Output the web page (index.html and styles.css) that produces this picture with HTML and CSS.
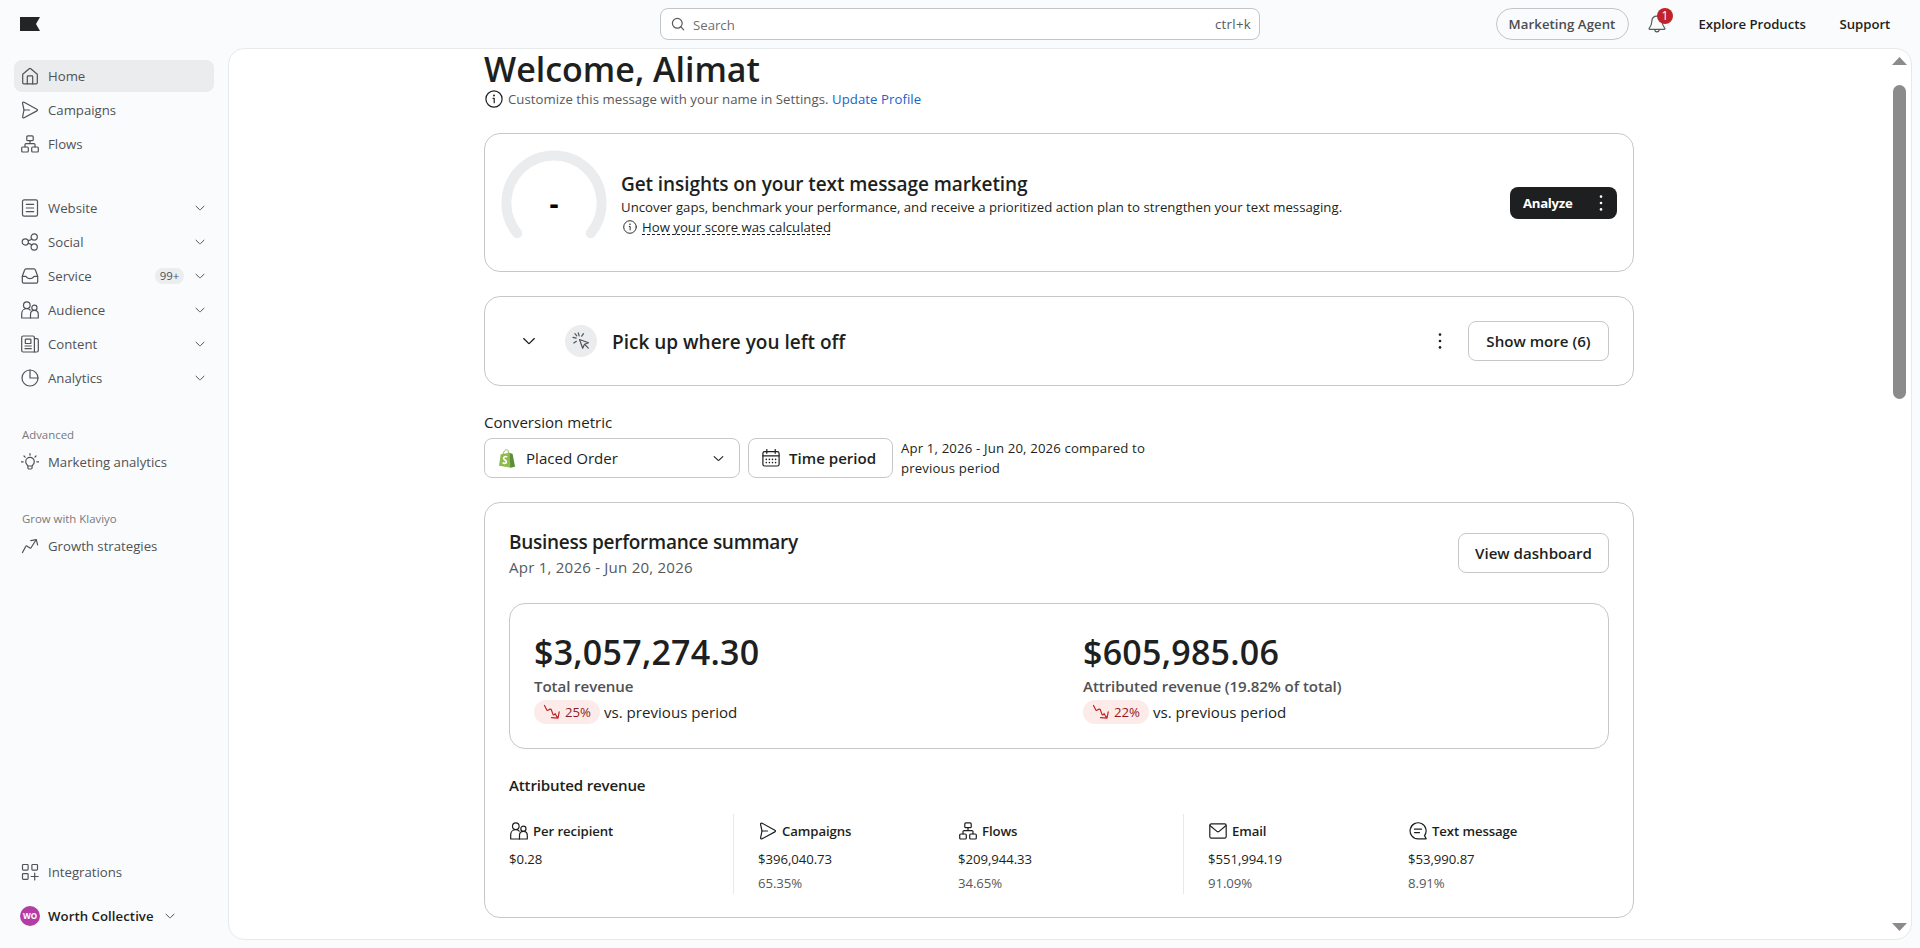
FILE: index.html
```html
<!DOCTYPE html>
<html lang="en">
<head>
	<meta charset="utf-8" />
	<title>Home | Klaviyo</title>
	<link rel="stylesheet" href="styles.css">
</head>
<body>
<!-- icons -->
<svg class="sprite">
	<symbol id="home" viewBox="0 0 18 18"><path d="M1.7 7.2 8.2 1.700q.8-.600 1.600 0L16.300 7.200v8.600a1 1 0 0 1-1 1H2.700a1 1 0 0 1-1-1z"/><path d="M6.300 16.800V9.700a.8.8 0 0 1 .8-.8h3.800a.8.8 0 0 1 .8.8v7.100"/></symbol>
	<symbol id="send" viewBox="0 0 18 18"><path d="M1.5 2.2c0-.9.8-1.3 1.6-1l12.8 7c.8.4.8 1.3 0 1.7l-12.8 6.900c-.8.4-1.600-.2-1.500-1L3 9z"/><path d="M3 9h5.500"/></symbol>
	<symbol id="flows" viewBox="0 0 18 18"><rect x="5.8" y=".9" width="6.4" height="4.8" rx="1"/><rect x=".7" y="12" width="6.6" height="5" rx="1"/><rect x="10.7" y="12" width="6.6" height="5" rx="1"/><path d="M9 5.7v2.9M4 12v-2.4a1 1 0 0 1 1-1h8a1 1 0 0 1 1 1V12"/></symbol>
	<symbol id="website" viewBox="0 0 18 18"><rect x="1.5" y=".9" width="15" height="16.2" rx="1.6"/><path d="M5.300 5.300h7.400M5.300 9h7.400M5.300 12.700h7.400"/></symbol>
	<symbol id="social" viewBox="0 0 18 18"><circle cx="4.3" cy="9" r="3.1"/><circle cx="13.2" cy="4" r="3.1"/><circle cx="13.2" cy="14" r="3.1"/><path d="M7.200 7.700c1.800-.3 3-1 3.500-2M7.200 10.300c1.800.3 3 1 3.500 2"/></symbol>
	<symbol id="service" viewBox="0 0 18 18"><path d="M1.300 9.300 3.600 3c.2-.7.8-1.100 1.500-1.100h7.800c.7 0 1.300.4 1.500 1.100l2.300 6.300v5.400a1.400 1.400 0 0 1-1.400 1.400H2.700a1.400 1.400 0 0 1-1.400-1.400z"/><path d="M1.300 9.300h3.200c.7 0 .9.5 1.300 1.100.6.9 1.500 1.200 3.200 1.200s2.600-.3 3.200-1.200c.4-.6.6-1.100 1.300-1.100h3.200"/></symbol>
	<symbol id="audience" viewBox="0 0 18 18"><circle cx="5.800" cy="4.200" r="3.300"/><path d="M9.500 17H.7v-4.300c0-3 2.200-5 5-5 1.500 0 2.700.5 3.500 1.500"/><circle cx="13.400" cy="6.800" r="2.600"/><path d="M9.500 17v-3.600c0-2.400 1.600-4 3.900-4s3.900 1.600 3.900 4V17z"/></symbol>
	<symbol id="content" viewBox="0 0 18 18"><path d="M13.400 17H2.200a1.500 1.500 0 0 1-1.500-1.500v-13A1.500 1.500 0 0 1 2.200 1h9.700a1.500 1.500 0 0 1 1.500 1.500z"/><path d="M13.400 3.700h2.400a1.500 1.500 0 0 1 1.500 1.500v10.300a1.500 1.500 0 0 1-1.500 1.500h-2.400"/><rect x="4.300" y="4.200" width="5.600" height="4.300" rx=".6"/><path d="M4 11h6.300M4 13.700h6.300"/></symbol>
	<symbol id="analytics" viewBox="0 0 18 18"><circle cx="9" cy="9" r="8"/><path d="M9 1v8h8"/></symbol>
	<symbol id="bulb" viewBox="0 0 18 18"><path d="M6.900 13.300c0-1.200-2.200-2-2.200-4.600a4.300 4.300 0 0 1 8.600 0c0 2.600-2.200 3.400-2.200 4.600v1.500a1.200 1.200 0 0 1-1.200 1.200H8.100a1.200 1.200 0 0 1-1.200-1.200zM6.900 13h4.200"/><path d="M9 .6v1.600M3 3l1.100 1.100M15 3l-1.100 1.100M.2 8.800h2M15.800 8.800h2"/></symbol>
	<symbol id="growth" viewBox="0 0 18 18"><path d="M1.500 15.500 4.800 9.300c.2-.4.6-.5 1-.3l3.200 2.100c.4.200.8.100 1-.3l5-7.800"/><path d="M9.800 3.600 15.300 2.600l1.300 5.200"/></symbol>
	<symbol id="apps" viewBox="0 0 18 18"><rect x="1.500" y="1.500" width="5.600" height="5.600" rx=".8"/><rect x="10.900" y="1.500" width="5.600" height="5.600" rx=".8"/><rect x="1.500" y="10.700" width="5.600" height="5.600" rx=".8"/><path d="M13.700 10v7M10.200 13.500h7"/></symbol>
	<symbol id="chev" viewBox="0 0 12 12"><path d="M2 4.200 5.500 7.600q.5.500 1 0L10 4.200"/></symbol>
	<symbol id="info" viewBox="0 0 18 18"><circle cx="9" cy="9" r="8.100"/><path d="M8 8.300h1.200v4.400"/><circle class="dot" cx="9" cy="5.500" r=".95"/></symbol>
	<symbol id="dots" viewBox="0 0 4 18"><circle class="dot" cx="2" cy="2.600" r="1.300"/><circle class="dot" cx="2" cy="9" r="1.300"/><circle class="dot" cx="2" cy="15.400" r="1.300"/></symbol>
	<symbol id="down" viewBox="0 0 18 18"><path d="M1.500 2.500 3.800 7c.2.400.6.500 1 .3l2.400-1.200c.400-.2.800 0 1 .4L10 11.400c.2.400.6.600 1 .4l1-.4M8.500 14.600l6.500.5 1.200-6.300M12 10.500l2.700 4.400"/></symbol>
	<symbol id="mail" viewBox="0 0 18 18"><rect x=".8" y="1.800" width="16.400" height="14.400" rx="1.600"/><path d="M1.200 3.700 8.200 9.600q.8.600 1.600 0L16.800 3.700"/></symbol>
	<symbol id="chat" viewBox="0 0 18 18"><path d="M17.200 16.800H9A8 8 0 1 1 15.500 13.600z"/><path d="M5.500 7.200h7M5.500 10.600h5"/></symbol>
</svg>

<div class="header">
	<div class="logo"><svg width="20" height="14" viewBox="0 0 20 14"><path d="M0 0h20l-4 7 4 7H0z"/></svg></div>
	<div class="search">
		<svg class="icon" viewBox="0 0 14 14"><circle cx="6.300" cy="6.300" r="4.900"/><path d="M9.900 9.900l2.800 3"/></svg>
		<span class="placeholder">Search</span>
		<span class="key">ctrl+k</span>
	</div>
	<div class="top-links">
		<a class="agent">Marketing Agent</a>
		<div class="bell">
			<svg class="icon" viewBox="0 0 18 20"><path d="M9 2.200C5.600 2.200 3.900 4.600 3.800 7.600c-.1 3.600-.7 4.600-2.500 6.500-.5.600-.2 1.300.5 1.300h14.400c.7 0 1-.7.5-1.300-1.800-1.900-2.400-2.900-2.500-6.500C14.100 4.600 12.400 2.200 9 2.200z"/><path d="M6.800 15.600c0 1.400 1 2.300 2.200 2.300s2.200-.9 2.200-2.300"/></svg>
			<span class="count">1</span>
		</div>
		<a class="explore">Explore Products</a>
		<a class="support">Support</a>
	</div>
</div>

<div class="page">
	<div class="sidebar">
		<ul class="nav">
			<li class="active"><svg class="icon"><use href="#home"/></svg><span>Home</span></li>
			<li><svg class="icon"><use href="#send"/></svg><span>Campaigns</span></li>
			<li><svg class="icon"><use href="#flows"/></svg><span>Flows</span></li>
		</ul>
		<ul class="nav nav-main">
			<li><svg class="icon"><use href="#website"/></svg><span>Website</span><svg class="icon chev"><use href="#chev"/></svg></li>
			<li><svg class="icon"><use href="#social"/></svg><span>Social</span><svg class="icon chev"><use href="#chev"/></svg></li>
			<li><svg class="icon"><use href="#service"/></svg><span>Service</span><b class="tag">99+</b><svg class="icon chev"><use href="#chev"/></svg></li>
			<li><svg class="icon"><use href="#audience"/></svg><span>Audience</span><svg class="icon chev"><use href="#chev"/></svg></li>
			<li><svg class="icon"><use href="#content"/></svg><span>Content</span><svg class="icon chev"><use href="#chev"/></svg></li>
			<li><svg class="icon"><use href="#analytics"/></svg><span>Analytics</span><svg class="icon chev"><use href="#chev"/></svg></li>
		</ul>
		<p class="nav-title">Advanced</p>
		<ul class="nav">
			<li><svg class="icon"><use href="#bulb"/></svg><span>Marketing analytics</span></li>
		</ul>
		<p class="nav-title">Grow with Klaviyo</p>
		<ul class="nav">
			<li><svg class="icon"><use href="#growth"/></svg><span>Growth strategies</span></li>
		</ul>
		<ul class="nav nav-bottom">
			<li><svg class="icon"><use href="#apps"/></svg><span>Integrations</span></li>
			<li class="account"><i class="avatar">WO</i><span>Worth Collective</span><svg class="icon chev"><use href="#chev"/></svg></li>
		</ul>
	</div>

	<div class="main">
		<div class="content">
			<h1>Welcome, Alimat</h1>
			<p class="hint"><svg class="icon"><use href="#info"/></svg><span>Customize this message with your name in Settings. <a>Update Profile</a></span></p>

			<div class="card insights">
				<div class="gauge">
					<svg width="106" height="106" viewBox="0 0 106 106"><path d="M16.200 83.200A47.600 47.600 0 1 1 89.800 83.200"/></svg>
					<span>-</span>
				</div>
				<div class="insights-text">
					<h2>Get insights on your text message marketing</h2>
					<p class="desc">Uncover gaps, benchmark your performance, and receive a prioritized action plan to strengthen your text messaging.</p>
					<p class="score"><svg class="icon"><use href="#info"/></svg><span>How your score was calculated</span></p>
				</div>
				<div class="analyze"><span>Analyze</span><svg class="icon dots"><use href="#dots"/></svg></div>
			</div>

			<div class="card pickup">
				<svg class="icon chev"><use href="#chev"/></svg>
				<div class="round"><svg class="icon" viewBox="0 0 18 18"><path d="M7.500 7.500l9 3.200-4 1.600-1.800 4z"/><path d="M13 12.700l3.300 3.400M6.300.8l.8 3M11.500 1.700 9.700 4.200M1 5.400l3.200.8M4.400 9.300 1.800 11M2.900 1.700 4.800 3.800"/></svg></div>
				<h2>Pick up where you left off</h2>
				<svg class="icon dots"><use href="#dots"/></svg>
				<div class="btn show-more">Show more (6)</div>
			</div>

			<p class="metric-title">Conversion metric</p>
			<div class="filters">
				<div class="btn select">
					<svg width="16" height="19" viewBox="0 0 16 19"><path fill="#8fba4c" d="M1.700 5.200 10.700 3.700l1.300 15L0 16.700z"/><path fill="#5a8e3a" d="M10.700 3.700 13.600 5l2.400 12.700-4.700 1z"/><path fill="none" stroke="#8fba4c" stroke-width="1" d="M4 5.500C4.500 2.500 6 .7 7.500.7s2 1.500 2 3.500"/><path fill="none" stroke="#fff" stroke-width="1.600" d="M8.300 7.900C6.500 7 4.500 7.700 4.600 9.400c.1 1.500 2.900 1.800 2.800 3.500 0 1.600-2 1.900-3.800.9"/></svg>
					<span>Placed Order</span>
					<svg class="icon chev"><use href="#chev"/></svg>
				</div>
				<div class="btn period">
					<svg class="icon" viewBox="0 0 18 18"><rect x=".9" y="2.600" width="16.200" height="14.400" rx="1.800"/><path d="M.9 6.800h16.200M4.800.3v4M13.200.3v4"/><path class="grid-dots" d="M4.300 10.400h9.500M4.300 13.600h9.500"/></svg>
					<span>Time period</span>
				</div>
				<p class="range">Apr 1, 2026 - Jun 20, 2026 compared to<br>previous period</p>
			</div>

			<div class="card summary">
				<div class="summary-head">
					<div>
						<h2>Business performance summary</h2>
						<p class="dates">Apr 1, 2026 - Jun 20, 2026</p>
					</div>
					<div class="btn dashboard">View dashboard</div>
				</div>
				<div class="totals">
					<div class="total">
						<p class="money">$3,057,274.30</p>
						<p class="name">Total revenue</p>
						<p class="change"><b><svg class="icon"><use href="#down"/></svg>25%</b><span>vs. previous period</span></p>
					</div>
					<div class="total">
						<p class="money">$605,985.06</p>
						<p class="name">Attributed revenue (19.82% of total)</p>
						<p class="change"><b><svg class="icon"><use href="#down"/></svg>22%</b><span>vs. previous period</span></p>
					</div>
				</div>
				<h3>Attributed revenue</h3>
				<div class="groups">
					<div class="group">
						<div class="stat"><h4><svg class="icon"><use href="#audience"/></svg><span>Per recipient</span></h4><p>$0.28</p></div>
					</div>
					<div class="group">
						<div class="stat"><h4><svg class="icon"><use href="#send"/></svg><span>Campaigns</span></h4><p>$396,040.73</p><p class="pct">65.35%</p></div>
						<div class="stat"><h4><svg class="icon"><use href="#flows"/></svg><span>Flows</span></h4><p>$209,944.33</p><p class="pct">34.65%</p></div>
					</div>
					<div class="group">
						<div class="stat"><h4><svg class="icon"><use href="#mail"/></svg><span>Email</span></h4><p>$551,994.19</p><p class="pct">91.09%</p></div>
						<div class="stat"><h4><svg class="icon"><use href="#chat"/></svg><span>Text message</span></h4><p>$53,990.87</p><p class="pct">8.91%</p></div>
					</div>
				</div>
			</div>
		</div>
		<div class="scrollbar">
			<svg width="15" height="8"><path d="M7.500 0 15 8H0z"/></svg>
			<div class="thumb"></div>
			<svg width="15" height="8"><path d="M0 0h15L7.500 8z"/></svg>
		</div>
	</div>
</div>
</body>
</html>
```

FILE: styles.css
```css
*{
margin:0;
padding:0;
box-sizing:border-box;
}
body{
height:948px;
overflow:hidden;
background:#fafbfd;
color:#1d1f20;
font-family:"Segoe UI","Open Sans","Noto Sans",sans-serif;
font-size:13.2px;
line-height:20px;
display:flex;
flex-direction:column;
}
ul{
list-style:none;
}
.sprite{
display:none;
}
.icon{
width:18px;
height:18px;
flex:none;
fill:none;
stroke:currentColor;
stroke-width:1.2;
stroke-linecap:round;
stroke-linejoin:round;
}
.icon.chev{
width:12px;
height:12px;
stroke-width:1;
}
.icon.dots{
width:4px;
height:18px;
}
.dot{
fill:currentColor;
stroke:none;
}

/* header */
.header{
height:48px;
flex:none;
display:grid;
grid-template-columns:660px 600px 1fr;
align-items:center;
}
.logo{
padding-left:20px;
line-height:0;
}
.logo svg{
fill:#232426;
}
.search{
height:32px;
border:1px solid #c3c6c8;
border-radius:8px;
background:#fff;
display:flex;
align-items:center;
padding:0 8px 0 10px;
color:#57595c;
}
.search .icon{
width:14px;
height:14px;
}
.placeholder{
flex:1;
margin-left:8px;
padding-top:1px;
color:#6c6f72;
}
.key{
letter-spacing:.3px;
}
.top-links{
display:flex;
align-items:center;
font-weight:600;
letter-spacing:-.04px;
}
.agent{
width:133px;
height:32px;
margin-left:236px;
padding-right:1px;
border:1px solid #c3c6c8;
border-radius:16px;
line-height:30px;
text-align:center;
letter-spacing:.06px;
color:#4b4d50;
}
.bell{
position:relative;
width:18px;
height:20px;
margin-left:19px;
color:#57595c;
}
.bell .icon{
height:20px;
}
.count{
position:absolute;
left:9px;
top:-6px;
width:16px;
height:16px;
border-radius:8px;
background:#c1232a;
color:#fff;
font-size:12px;
font-weight:400;
line-height:16px;
text-align:center;
}
.explore{
margin-left:32.5px;
width:141px;
}

/* sidebar */
.page{
flex:1;
min-height:0;
display:flex;
}
.sidebar{
width:228px;
padding:12px 14px 16px;
display:flex;
flex-direction:column;
color:#505255;
}
.nav li{
height:32px;
margin-bottom:2px;
padding:0 8px 0 7px;
border-radius:8px;
display:flex;
align-items:center;
}
.nav li span{
margin-left:9px;
}
.nav .active{
background:#ebecee;
}
.nav .chev{
margin-left:auto;
}
.nav-main{
margin-top:30px;
}
.nav-title{
margin:31px 0 3px 8px;
font-size:11.4px;
line-height:16px;
color:#77797c;
}
.tag{
margin-left:auto;
width:29px;
height:16px;
border-radius:8px;
background:#ebedee;
font-size:11.4px;
font-weight:400;
line-height:16px;
text-align:center;
}
.nav .tag + .chev{
margin-left:10px;
}
.nav-bottom{
margin-top:auto;
}
.nav .account{
margin:12px 0 0;
padding-left:6px;
color:#1d1f20;
font-weight:600;
letter-spacing:.06px;
}
.nav .account span{
margin-left:8px;
}
.nav .account .chev{
margin-left:10px;
color:#505255;
}
.avatar{
width:20px;
height:20px;
border-radius:10px;
background:#b43da5;
color:#fff;
font-size:8px;
font-style:normal;
font-weight:700;
line-height:20px;
text-align:center;
}

/* main */
.main{
width:1684px;
height:892px;
border:1px solid #e6eaea;
border-radius:16px;
background:#fff;
display:flex;
justify-content:space-between;
}
.content{
width:1150px;
margin-left:255px;
}
h1{
font-size:34px;
line-height:40px;
font-weight:600;
}
h2{
font-size:19px;
line-height:28px;
font-weight:600;
}
.hint{
height:20px;
display:flex;
align-items:center;
padding-left:1px;
color:#57595c;
letter-spacing:.05px;
}
.hint .icon{
margin-right:5px;
color:#1d1f20;
}
.hint a{
color:#1b62c9;
}
.card{
border:1px solid #c5c8ca;
border-radius:16px;
}
.btn{
height:40px;
border:1px solid #c5c8ca;
border-radius:8px;
font-size:15.1px;
font-weight:600;
line-height:38px;
text-align:center;
}
.insights{
height:139px;
margin-top:24px;
padding:16px;
display:flex;
}
.gauge{
position:relative;
width:106px;
height:106px;
}
.gauge path{
fill:none;
stroke:#ebecee;
stroke-width:10;
stroke-linecap:round;
}
.gauge span{
position:absolute;
left:0;
top:33px;
width:106px;
font-size:28px;
font-weight:700;
line-height:40px;
text-align:center;
color:#000;
}
.insights-text{
flex:1;
margin:20px 0 0 14px;
}
.insights-text h2{
letter-spacing:-.08px;
}
.desc{
line-height:19px;
letter-spacing:.02px;
}
.score{
display:flex;
align-items:center;
padding-left:2px;
}
.score .icon{
width:14px;
height:14px;
margin-right:5px;
}
.score span{
text-decoration:underline dashed 1px;
text-underline-offset:2px;
}
.analyze{
width:107px;
height:32px;
margin-top:37px;
padding:0 14px 0 13px;
border-radius:8px;
background:#1d1f20;
color:#fff;
font-weight:700;
letter-spacing:-.3px;
display:flex;
align-items:center;
justify-content:space-between;
}
.pickup{
height:90px;
margin-top:24px;
padding:0 24px 0 36px;
display:flex;
align-items:center;
}
.pickup .chev{
width:16px;
height:16px;
}
.pickup h2{
padding-top:1px;
}
.round{
width:32px;
height:32px;
margin:0 15px 0 28px;
border-radius:16px;
background:#ebecee;
color:#505255;
display:flex;
align-items:center;
justify-content:center;
}
.pickup .dots{
margin-left:auto;
}
.show-more{
width:141px;
margin-left:26px;
}
.metric-title{
margin-top:24px;
font-size:15.1px;
line-height:24px;
}
.filters{
display:flex;
margin-top:4px;
}
.select{
width:256px;
padding:0 14px;
display:flex;
align-items:center;
font-weight:400;
}
.select span{
margin-left:11px;
}
.select .chev{
width:13px;
height:13px;
margin-left:auto;
}
.period{
width:145px;
margin:0 8px;
padding-left:13px;
display:flex;
align-items:center;
}
.period span{
margin-left:9px;
}
.grid-dots{
stroke-width:1.6;
stroke-dasharray:0 3.1;
}
.range{
letter-spacing:.15px;
}
.summary{
height:416px;
margin-top:24px;
padding:24px;
}
.summary-head{
height:76px;
display:flex;
justify-content:space-between;
}
.summary-head h2{
padding-top:3px;
line-height:25px;
letter-spacing:-.28px;
}
.dates{
font-size:15.1px;
line-height:24px;
letter-spacing:.2px;
color:#57595c;
}
.dashboard{
width:151px;
margin-top:6px;
}
.totals{
height:146px;
padding:24px;
border:1px solid #c5c8ca;
border-radius:16px;
display:flex;
}
.total{
width:549px;
flex:none;
}
.total + .total{
width:500px;
}
.money{
padding-top:2px;
font-size:34px;
line-height:44px;
font-weight:600;
letter-spacing:.24px;
}
.name{
font-size:15.1px;
line-height:24px;
font-weight:600;
letter-spacing:-.08px;
color:#505255;
}
.change{
display:flex;
align-items:center;
height:26px;
padding-top:1px;
font-size:15.1px;
}
.change b{
width:66px;
height:24px;
margin-right:4px;
padding-left:9px;
border-radius:12px;
background:#fdebe9;
color:#8e1c22;
font-size:13.2px;
font-weight:400;
display:flex;
align-items:center;
}
.change .icon{
margin-right:4px;
color:#c1232a;
}
h3{
margin-top:24px;
font-size:15.1px;
line-height:24px;
font-weight:600;
letter-spacing:-.17px;
}
.groups{
display:flex;
margin-top:17px;
}
.group{
height:80px;
padding-top:5px;
display:flex;
}
.group + .group{
padding-left:24px;
border-left:1px solid #e6e8e9;
}
.group:first-child{
width:224px;
}
.group:nth-child(2){
width:450px;
}
.stat{
width:200px;
letter-spacing:-.06px;
}
.stat h4{
height:24px;
margin-bottom:6px;
font-size:13.2px;
font-weight:600;
letter-spacing:-.1px;
display:flex;
align-items:center;
}
.stat h4 .icon{
margin:0 5px 0 1px;
}
.pct{
margin-top:4px;
color:#57595c;
}

/* scrollbar */
.scrollbar{
width:15px;
margin:8px 4px 8px 0;
display:flex;
flex-direction:column;
align-items:center;
fill:#8b8b8b;
}
.thumb{
width:13px;
height:314px;
margin:20px 0 auto;
border-radius:7px;
background:#8b8b8b;
}
```
